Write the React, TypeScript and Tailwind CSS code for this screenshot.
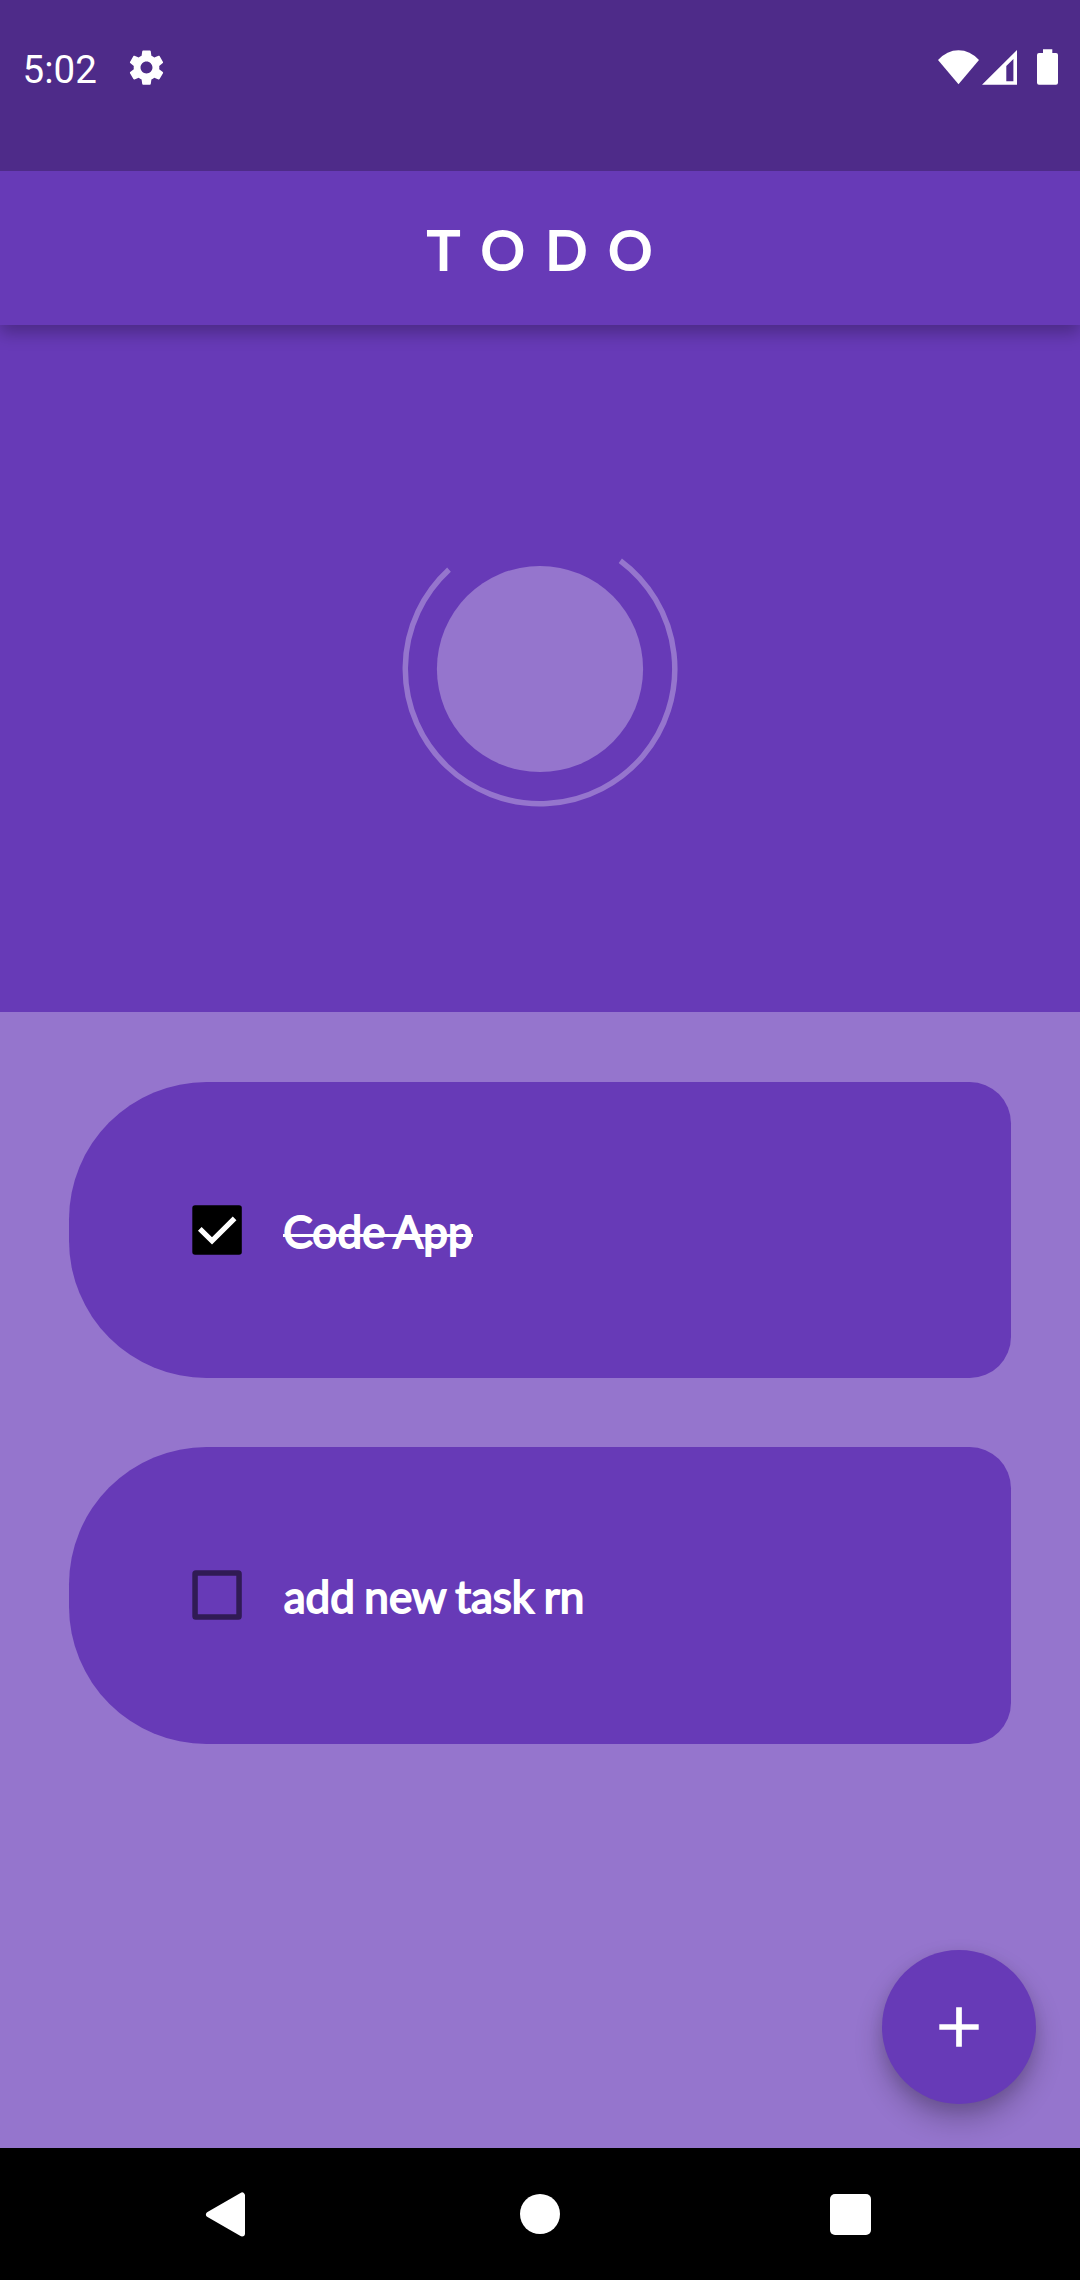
type Task = { title: string; done: boolean };

const tasks: Task[] = [
  { title: "Code App", done: true },
  { title: "add new task rn", done: false },
];

function StatusBar() {
  return (
    <div className="relative z-20 flex h-[171px] shrink-0 bg-[#4e2b89] text-white">
      <div className="flex h-[136px] w-full items-center">
        <span className="ml-[22.6px] w-[103.4px] pt-[4.4px] font-[Roboto,sans-serif] text-[38.5px] leading-none">5:02</span>
        <svg className="size-[41px] -translate-y-[0.9px]" viewBox="0 0 24 24" fill="currentColor">
          <path d="M19.43 12.98c.04-.32.07-.64.07-.98s-.03-.66-.07-.98l2.11-1.65c.19-.15.24-.42.12-.64l-2-3.46c-.12-.22-.39-.3-.61-.22l-2.49 1c-.52-.4-1.08-.73-1.69-.98l-.38-2.65C14.46 2.18 14.25 2 14 2h-4c-.25 0-.46.18-.49.42l-.38 2.65c-.61.25-1.17.59-1.69.98l-2.49-1c-.23-.09-.49 0-.61.22l-2 3.46c-.13.22-.07.49.12.64l2.11 1.65c-.04.32-.07.65-.07.98s.03.66.07.98l-2.11 1.65c-.19.15-.24.42-.12.64l2 3.46c.12.22.39.3.61.22l2.49-1c.52.4 1.08.73 1.69.98l.38 2.65c.03.24.24.42.49.42h4c.25 0 .46-.18.49-.42l.38-2.65c.61-.25 1.17-.59 1.69-.98l2.49 1c.23.09.49 0 .61-.22l2-3.46c.12-.22.07-.49-.12-.64l-2.11-1.65zM12 15.5c-1.93 0-3.5-1.57-3.5-3.5s1.57-3.5 3.5-3.5 3.5 1.57 3.5 3.5-1.57 3.5-3.5 3.5z" />
        </svg>
        <svg className="ml-auto h-[76px] w-[160px]" viewBox="0 0 160 76" fill="currentColor">
          <path d="M18 30Q27 20.2 38.5 20.2T59 30L38.5 54.3Z" />
          <path fillRule="evenodd" d="M62 54.7L97 20V54.7ZM86.3 36V51.3H93.4V29Z" />
          <path d="M123 19.3h9.3V23H136a2 2 0 0 1 2 2v27.7a2 2 0 0 1-2 2h-17a2 2 0 0 1-2-2V25a2 2 0 0 1 2-2h4Z" />
        </svg>
      </div>
    </div>
  );
}

function Checkbox({ checked }: { checked: boolean }) {
  return (
    <svg className="size-[50px] shrink-0" viewBox="0 0 50 50" fill="none">
      {checked ? (
        <>
          <rect x="0.3" y="0.2" width="49.5" height="49.6" rx="2.75" fill="#000" />
          <path d="M7.8 23.9L20 35.8L42.6 13.3" stroke="#fff" strokeWidth="5.2" />
        </>
      ) : (
        <rect x="3.05" y="3" width="44" height="44" rx="0.8" stroke="#301b54" strokeWidth="5.5" />
      )}
    </svg>
  );
}

function TaskCard({ task }: { task: Task }) {
  return (
    <div className="flex h-[296.75px] items-center rounded-l-[137.5px] rounded-r-[41.25px] bg-[#673ab7] pl-[123.5px]">
      <Checkbox checked={task.done} />
      <span
        className={`relative whitespace-nowrap pt-[2px] font-[Lato,sans-serif] text-[44px] leading-[56px] text-white [-webkit-text-stroke:1.8px_white] ${
          task.done
            ? "ml-[40.9px] tracking-[0.2px] [word-spacing:-2.4px] after:absolute after:inset-x-0 after:top-[33px] after:h-[3px] after:bg-white"
            : "ml-[41.4px] [word-spacing:-1.7px]"
        }`}
      >
        {task.title}
      </span>
    </div>
  );
}

export default function App() {
  return (
    <div className="flex h-[2280px] w-[1080px] flex-col overflow-hidden bg-[#9575cd]">
      <StatusBar />
      <header className="relative z-10 flex h-[154px] shrink-0 items-center justify-center bg-[#673ab7] shadow-[0_8px_16px_rgba(0,0,0,0.27)]">
        <h1 className="pt-[3px] pl-[20.5px] font-[Lato,sans-serif] text-[55px] font-normal leading-none tracking-[20.9px] text-white [font-kerning:none] [-webkit-text-stroke:2.2px_white]">TODO</h1>
      </header>
      <section className="flex h-[687px] shrink-0 items-center justify-center bg-[#673ab7]">
        <svg className="size-[280px]" viewBox="-140 -140 280 280">
          <circle r="103.1" fill="#9575cd" />
          <path d="M-91 -99.4A134.75 134.75 0 1 0 80.3 -108.3" fill="none" stroke="#9575cd" strokeWidth="5.5" />
        </svg>
      </section>
      <main className="relative flex flex-1 flex-col gap-[68.5px] px-[68.75px] pt-[69.5px]">
        {tasks.map((task) => (
          <TaskCard key={task.title} task={task} />
        ))}
        <button className="absolute right-[44px] bottom-[44px] flex size-[154px] items-center justify-center rounded-full bg-[#673ab7] shadow-[0_16px_28px_rgba(0,0,0,0.24),0_5px_14px_rgba(0,0,0,0.1)]" aria-label="Add task">
          <svg className="size-[40px]" viewBox="0 0 40 40" stroke="#fff" strokeWidth="5.7">
            <path d="M20 .3V39.7M.3 20H39.7" />
          </svg>
        </button>
      </main>
      <nav className="relative z-10 flex h-[132px] shrink-0 items-center bg-black text-white">
        <svg className="ml-[200.4px] h-[50px] w-[50px]" viewBox="0 0 50 50" fill="currentColor" stroke="currentColor" strokeWidth="6" strokeLinejoin="round">
          <path d="M42 6.5V44.5L9 25.5Z" />
        </svg>
        <div className="ml-[269.4px] size-[40.5px] rounded-full bg-white" />
        <div className="ml-[269.7px] mt-[1px] size-[41.25px] rounded-[5px] bg-white" />
      </nav>
    </div>
  );
}
